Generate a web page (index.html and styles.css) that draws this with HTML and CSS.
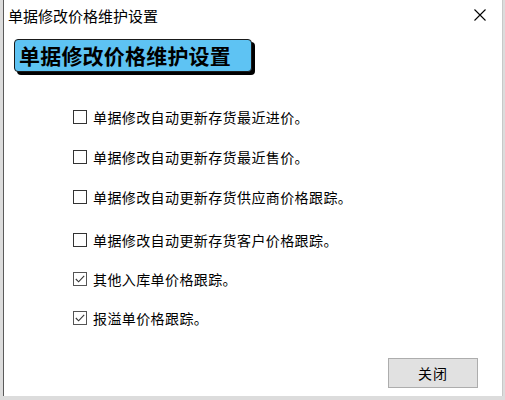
FILE: index.html
```html
<!DOCTYPE html>
<html>
<head>
<meta charset="utf-8">
<link rel="stylesheet" href="styles.css">
</head>
<body>
<div class="window">
  <div class="titlebar">
    <span class="title">单据修改价格维护设置</span>
    <svg class="close" width="12" height="12" viewBox="0 0 12 12"><path d="M0.5 0.5 L11.5 11.5 M11.5 0.5 L0.5 11.5" stroke="#000" stroke-width="1.1" fill="none"/></svg>
  </div>
  <div class="content">
    <div class="banner"><span>单据修改价格维护设置</span></div>
    <div class="options">
      <label class="opt"><span class="box"></span>单据修改自动更新存货最近进价。</label>
      <label class="opt"><span class="box"></span>单据修改自动更新存货最近售价。</label>
      <label class="opt"><span class="box"></span>单据修改自动更新存货供应商价格跟踪。</label>
      <label class="opt opt-gap"><span class="box"></span>单据修改自动更新存货客户价格跟踪。</label>
      <label class="opt opt-tight"><span class="box checked"><svg width="12" height="12" viewBox="0 0 12 12"><path d="M1.8 6 L4.6 8.8 L10.2 2.8" stroke="#333" stroke-width="1.1" fill="none"/></svg></span>其他入库单价格跟踪。</label>
      <label class="opt opt-tight"><span class="box checked"><svg width="12" height="12" viewBox="0 0 12 12"><path d="M1.8 6 L4.6 8.8 L10.2 2.8" stroke="#333" stroke-width="1.1" fill="none"/></svg></span>报溢单价格跟踪。</label>
    </div>
    <div class="footer">
      <button class="btn">关闭</button>
    </div>
  </div>
</div>
</body>
</html>
```
FILE: styles.css
```css
html, body {
  margin: 0;
  padding: 0;
}
body {
  width: 505px;
  height: 400px;
  background: #dcdcdc;
  font-family: "Noto Sans CJK SC", "Noto Sans", sans-serif;
  overflow: hidden;
}
.window {
  margin-left: 3px;
  width: 498px;
  height: 396px;
  background: #fff;
  border-left: 1px solid #5a5a5a;
  border-right: 1px solid #c8c8c8;
  display: flex;
  flex-direction: column;
}
.titlebar {
  height: 32px;
  display: flex;
  align-items: center;
  justify-content: space-between;
  padding: 0 16px 0 4px;
}
.title {
  font-size: 15px;
  color: #000;
  line-height: 1;
  margin-top: -2px;
}
.close {
  display: block;
  margin-top: -2px;
}
.content {
  flex: 1;
  display: flex;
  flex-direction: column;
  padding: 7px 0 0 10px;
}
.banner {
  width: 232px;
  height: 31px;
  background: #5ec3f3;
  border: 1px solid #1a1a1a;
  border-radius: 4px;
  box-shadow: 3px 3px 0 #000;
  display: flex;
  align-items: center;
  padding-left: 4px;
  box-sizing: content-box;
}
.banner span {
  font-size: 21px;
  font-weight: bold;
  color: #000;
  line-height: 1;
  letter-spacing: 0.2px;
}
.options {
  display: flex;
  flex-direction: column;
  padding-left: 59px;
  margin-top: 35px;
  gap: 20px;
}
.opt {
  display: flex;
  align-items: center;
  font-size: 14px;
  line-height: 20px;
  color: #000;
  letter-spacing: 0.4px;
}
.opt-gap {
  margin-top: 3px;
}
.opt-tight {
  margin-top: -1px;
}
.box {
  width: 12px;
  height: 12px;
  border: 1px solid #333;
  margin-right: 6px;
  display: flex;
  align-items: center;
  justify-content: center;
  background: #fff;
}
.box.checked {
  border-color: #555;
}
.box svg {
  display: block;
}
.footer {
  margin-top: auto;
  display: flex;
  justify-content: flex-end;
  padding: 0 24px 8px 0;
}
.btn {
  width: 90px;
  height: 30px;
  background: #e1e1e1;
  border: 1px solid #adadad;
  font-family: "Noto Sans CJK SC", sans-serif;
  font-size: 14px;
  color: #000;
  padding: 0;
  letter-spacing: 1px;
}
```
